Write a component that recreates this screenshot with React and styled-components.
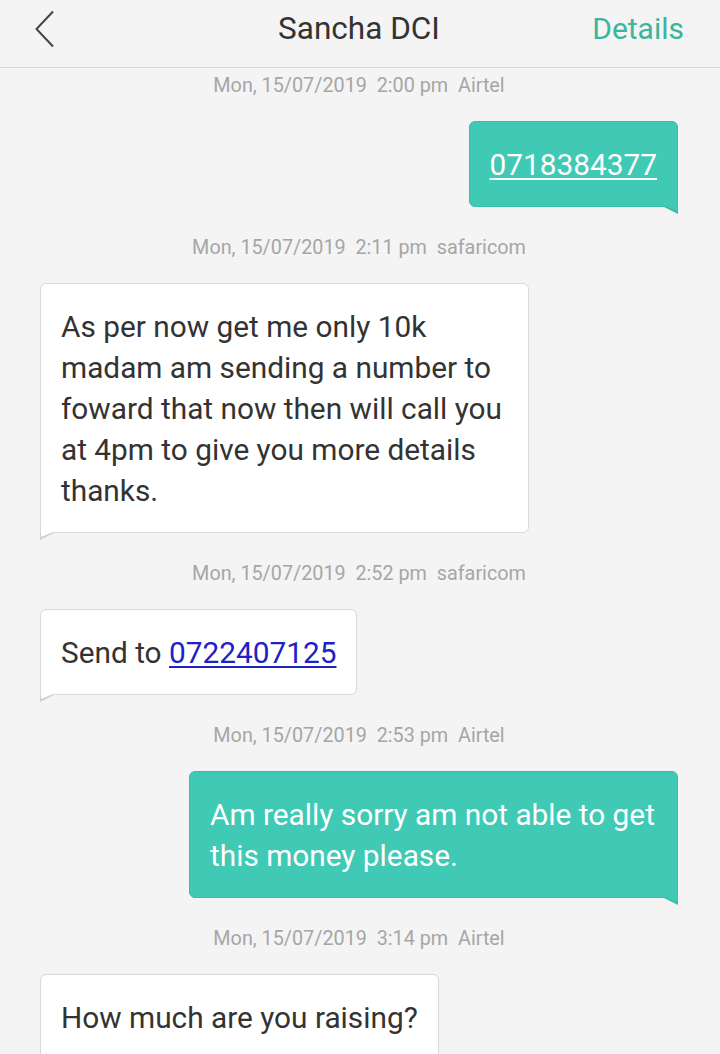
import React from 'react'
import styled, { createGlobalStyle } from 'styled-components'

const Global = createGlobalStyle`
  html, body {
    margin: 0;
    padding: 0;
    background: #f4f4f4;
  }
  body {
    font-family: Roboto, "Noto Sans", Arial, sans-serif;
  }
`

const Screen = styled.div`
  width: 720px;
  height: 100vh;
  overflow: hidden;
  background: #f4f4f4;
  display: flex;
  flex-direction: column;
`

const TopBar = styled.header`
  height: 68px;
  flex-shrink: 0;
  box-sizing: border-box;
  border-bottom: 1px solid #dadada;
  display: grid;
  grid-template-columns: 120px 1fr 120px;
  align-items: center;
  padding: 0 36px 10px 34px;
`

const Back = styled.button`
  background: none;
  border: none;
  padding: 0;
  width: 26px;
  height: 40px;
  display: flex;
  align-items: center;
  cursor: pointer;
`

const Title = styled.h1`
  margin: 0;
  text-align: center;
  font-size: 31.5px;
  font-weight: 400;
  color: #333;
`

const Details = styled.a`
  justify-self: end;
  font-size: 30px;
  color: #3cb59c;
  text-decoration: none;
`

const Thread = styled.main`
  display: flex;
  flex-direction: column;
  padding: 0 42px 0 40px;
`

const Stamp = styled.div`
  text-align: center;
  font-size: 19.8px;
  line-height: 24px;
  color: #a6a6a6;
  margin: 29px 0 23px;
  white-space: pre;
  &:first-child {
    margin-top: 6px;
  }
`

const Bubble = styled.div`
  position: relative;
  align-self: ${p => (p.out ? 'flex-end' : 'flex-start')};
  max-width: 489px;
  box-sizing: border-box;
  padding: 22px 20px 21px 20px;
  border-radius: 6px;
  font-size: 29.8px;
  line-height: 41px;
  background: ${p => (p.out ? '#40c9b5' : '#fff')};
  color: ${p => (p.out ? '#fff' : '#333')};
  border: 1px solid ${p => (p.out ? '#3bbba8' : '#d9d9d9')};
  ${p => (p.out ? 'border-bottom-right-radius: 0;' : 'border-bottom-left-radius: 0;')}

  /* little tail under the bubble corner */
  &::before,
  &::after {
    content: '';
    position: absolute;
    top: 100%;
  }
  &::before {
    ${p => (p.out ? 'right: -1px;' : 'left: -1px;')}
    width: 14px;
    height: 7px;
    background: ${p => (p.out ? '#3bbba8' : '#cfcfcf')};
    clip-path: ${p =>
      p.out
        ? 'polygon(0 0, 100% 0, 100% 100%)'
        : 'polygon(0 0, 100% 0, 0 100%)'};
    margin-top: 1px;
  }
  &::after {
    ${p => (p.out ? 'right: 0;' : 'left: 0;')}
    width: 12px;
    height: 5px;
    background: ${p => (p.out ? '#40c9b5' : '#fff')};
    clip-path: ${p =>
      p.out
        ? 'polygon(0 0, 100% 0, 100% 100%)'
        : 'polygon(0 0, 100% 0, 0 100%)'};
  }
`

const Num = styled.a`
  color: ${p => (p.light ? '#fff' : '#1c22c8')};
  text-decoration: underline;
  text-underline-offset: 3px;
  text-decoration-thickness: 1.5px;
`

const messages = [
  { when: 'Mon, 15/07/2019  2:00 pm  Airtel', out: true, body: <Num light>0718384377</Num> },
  {
    when: 'Mon, 15/07/2019  2:11 pm  safaricom',
    body: 'As per now get me only 10k madam am sending a number to foward that now then will call you at 4pm to give you more details thanks.',
  },
  { when: 'Mon, 15/07/2019  2:52 pm  safaricom', body: <>Send to <Num>0722407125</Num></> },
  { when: 'Mon, 15/07/2019  2:53 pm  Airtel', out: true, body: 'Am really sorry am not able to get this money please.' },
  { when: 'Mon, 15/07/2019  3:14 pm  Airtel', body: 'How much are you raising?' },
]

const Chevron = () => (
  <svg width="22" height="38" viewBox="0 0 22 38" fill="none">
    <path d="M19 1.5 L2.5 19 L19 36.5" stroke="#444" strokeWidth="2" strokeLinejoin="miter" />
  </svg>
)

export default function App() {
  return (
    <>
      <Global />
      <Screen>
        <TopBar>
          <Back aria-label="back"><Chevron /></Back>
          <Title>Sancha DCI</Title>
          <Details>Details</Details>
        </TopBar>
        <Thread>
          {messages.map((m, i) => (
            <React.Fragment key={i}>
              <Stamp>{m.when}</Stamp>
              <Bubble out={m.out}>{m.body}</Bubble>
            </React.Fragment>
          ))}
        </Thread>
      </Screen>
    </>
  )
}
